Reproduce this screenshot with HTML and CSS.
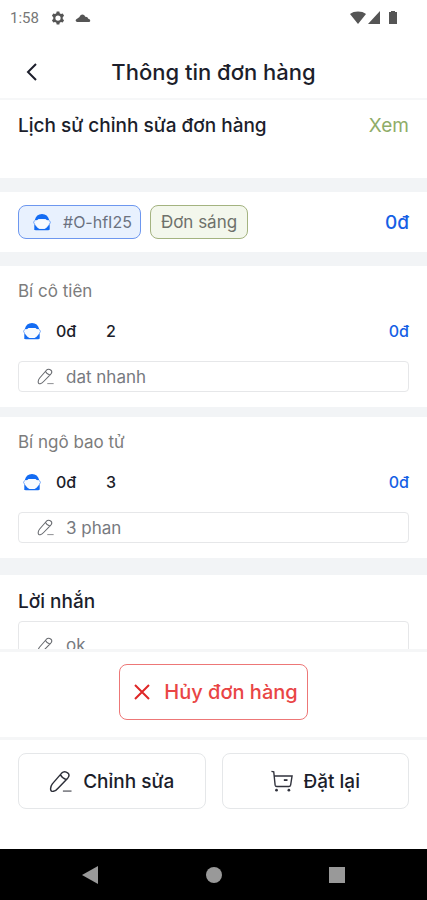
FILE: index.html
```html
<!DOCTYPE html>
<html lang="vi">
<head>
<meta charset="utf-8">
<meta name="viewport" content="width=device-width, initial-scale=1">
<title>Thông tin đơn hàng</title>
<link rel="stylesheet" href="styles.css">
</head>
<body>
<svg class="defs" aria-hidden="true">
  <symbol id="pen" viewBox="0 0 24 24">
    <path d="M13 3.500 3.500 14.500c-1.300 1.700-2 3.800-1.800 5.700.2 1.800 1.300 2.400 3 2 2-.4 3.500-1.700 5-3.500L19.500 8.500c1.700-2 1.900-3.800.2-5.300-2.100-1.700-4.800-1.700-6.700.3Z M12 5c1.200 2.600 3.200 4.300 6.200 5"/>
    <path d="M14.500 22H23.500" opacity=".7"/>
  </symbol>
  <symbol id="person" viewBox="0 0 18 18">
    <path d="M1.800 7C2.800 3 5.200 1 9 1s6.200 2 7.200 6L14 7.200 12.500 6h-7L4 7.200Z" fill="#146cf3"/>
    <path d="M1.300 11 4.500 14.700l2 1.300h5l2-1.300 3.200-3.700v5c0 .8-.5 1.200-1.300 1.200H2.600c-.8 0-1.300-.4-1.300-1.200Z" fill="#146cf3"/>
    <path d="M2 7.200.5 9.200l1.300 2.600M16 7.200l1.500 2-1.300 2.600" fill="none" stroke="#75a8fa" stroke-width="1"/>
    <path d="M1.700 9.200 4 7.300 6.500 7 9 6.300l2.500.7 2.500.3 2.300 1.900-2 3.800-2.200 2.200H5.900l-2.200-2.200Z" fill="#f8fbff"/>
  </symbol>
</svg>

<div class="status">
  <div class="status-group">
    <span class="clock">1:58</span>
    <svg class="gear" viewBox="0 0 24 24"><path d="M9.700 1h4.600l.6 3 2.200 1.300 3-1 2.300 4-2.300 2.200v3l2.300 2.200-2.300 4-3-1-2.200 1.300-.6 3H9.700l-.6-3-2.200-1.300-3 1-2.300-4 2.300-2.200v-3L1.600 8.300l2.300-4 3 1L9.100 4Z M12 7.500a4.500 4.500 0 1 0 0 9 4.500 4.500 0 0 0 0-9Z" fill-rule="evenodd"/></svg>
    <svg class="cloud" viewBox="0 0 16 10"><path d="M3 9C.2 9-.2 6.500 2.400 5.400L4.500 4C5.200.8 9.200.4 10.200 3.800c1.800-.2 2.600.8 3 2 2.700.5 2.600 3.200.3 3.200Z"/></svg>
  </div>
  <svg class="signals" viewBox="0 0 48 14"><path d="M0 3C4-.3 12-.3 16 3L8 13Z M30 0v13H18Z M41 0h4v1h2v12h-8V1h2Z"/></svg>
</div>

<header class="header">
  <button class="back" aria-label="Quay lại"><svg viewBox="0 0 12 18"><path d="M10 1 2 9l8 8"/></svg></button>
  <h1>Thông tin đơn hàng</h1>
</header>

<main class="content">
  <section class="history">
    <h2>Lịch sử chỉnh sửa đơn hàng</h2>
    <a href="#history">Xem</a>
  </section>

  <section class="summary">
    <span class="chip chip-blue"><svg class="person"><use href="#person"/></svg>#O-hfI25</span>
    <span class="chip chip-green">Đơn sáng</span>
    <strong class="total">0đ</strong>
  </section>

  <section class="item">
    <h3>Bí cô tiên</h3>
    <div class="line">
      <svg class="person"><use href="#person"/></svg>
      <span class="price">0đ</span><span class="qty">2</span><strong class="amount">0đ</strong>
    </div>
    <label class="note"><svg class="pen"><use href="#pen"/></svg><input aria-label="Ghi chú Bí cô tiên" value="dat nhanh"></label>
  </section>

  <section class="item">
    <h3>Bí ngô bao tử</h3>
    <div class="line">
      <svg class="person"><use href="#person"/></svg>
      <span class="price">0đ</span><span class="qty">3</span><strong class="amount">0đ</strong>
    </div>
    <label class="note"><svg class="pen"><use href="#pen"/></svg><input aria-label="Ghi chú Bí ngô bao tử" value="3 phan"></label>
  </section>

  <section class="message">
    <h2>Lời nhắn</h2>
    <label class="note note-tall"><svg class="pen"><use href="#pen"/></svg><input aria-label="Lời nhắn" value="ok"></label>
  </section>
</main>

<footer>
  <div class="cancel-bar">
    <button class="btn btn-cancel"><svg class="cross" viewBox="0 0 16 16"><path d="m1 1 14 14M15 1 1 15"/></svg>Hủy đơn hàng</button>
  </div>
  <div class="actions">
    <button class="btn"><svg class="pen-large"><use href="#pen"/></svg>Chỉnh sửa</button>
    <button class="btn"><svg class="cart" viewBox="0 0 24 24"><path d="M.5 1.500 3 2l1.500 14.500c.2 1.200.8 1.500 1.800 1.500h13.200c1 0 1.700-.5 1.900-1.500L23 6.500H3.700"/><path d="M14 11h4" stroke-width="2"/><circle cx="6" cy="22" r="1.500"/><circle cx="19.500" cy="22" r="1.500"/></svg>Đặt lại</button>
  </div>
</footer>

<nav class="system-nav" aria-label="Hệ thống">
  <button aria-label="Trở về"><svg viewBox="0 0 18 18"><path d="M0 9 16 0v18Z"/></svg></button>
  <button aria-label="Màn hình chính"><svg viewBox="0 0 18 18"><circle cx="9" cy="9" r="8"/></svg></button>
  <button aria-label="Gần đây"><svg viewBox="0 0 18 18"><path d="M1 1h16v16H1Z"/></svg></button>
</nav>
</body>
</html>
```
FILE: styles.css
```css
* {
  box-sizing: border-box;
}

body {
  margin: 0;
  height: 100vh;
  display: flex;
  flex-direction: column;
  background: #fff;
  color: #1c1e2b;
  font-family: Inter, "Noto Sans", sans-serif;
}

h1, h2, h3 {
  margin: 0;
  font-weight: 500;
}

button, input {
  font: inherit;
  color: inherit;
}

svg {
  flex: none;
}

.defs {
  position: absolute;
  width: 0;
  height: 0;
}

.status {
  display: flex;
  justify-content: space-between;
  align-items: center;
  height: 36px;
  padding: 0 29px 0 10px;
  color: #777;
  fill: #555;
}

.status-group {
  display: flex;
  align-items: center;
}

.clock {
  font: 15px/20px Roboto, sans-serif;
}

.gear {
  width: 14px;
  height: 14px;
  margin-left: 12px;
}

.cloud {
  width: 16px;
  height: 10px;
  margin-left: 10px;
}

.signals {
  width: 48px;
  height: 14px;
}

.header {
  display: grid;
  grid-template-columns: 28px 1fr 28px;
  align-items: center;
  height: 64px;
  padding: 10px 18px 0;
  border-bottom: 2px solid #f6f7f8;
}

.header h1 {
  font-size: 22px;
  line-height: 28px;
  text-align: center;
}

.back {
  display: flex;
  justify-content: center;
  padding: 0;
  border: 0;
  background: none;
}

.back svg {
  width: 12px;
  height: 18px;
  fill: none;
  stroke: #1c1e2b;
  stroke-width: 2;
}

.content {
  flex: 1;
  min-height: 0;
  overflow: hidden;
}

.history {
  display: flex;
  justify-content: space-between;
  height: 78px;
  padding: 14px 18px 0;
}

h2 {
  font-size: 19px;
  line-height: 24px;
}

.history a {
  color: #8fac68;
  font-size: 19px;
  line-height: 24px;
  text-decoration: none;
}

.summary {
  display: flex;
  align-items: center;
  gap: 9px;
  padding: 13px 18px;
  border: solid #f2f4f6;
  border-width: 14px 0;
}

.chip {
  display: flex;
  align-items: center;
  height: 34px;
  padding: 0 10px;
  border: 1px solid;
  border-radius: 8px;
  font-size: 17px;
}

.chip-blue {
  gap: 12px;
  padding: 0 8px 0 14px;
  background: #e8f1fe;
  border-color: #6d97ef;
  color: #6b7280;
  font-size: 16px;
}

.chip-green {
  background: #f3f7ec;
  border-color: #a4b380;
  color: #6e716b;
}

.person {
  width: 18px;
  height: 18px;
}

.total, .amount {
  margin-left: auto;
  color: #165fe5;
  font-weight: 500;
}

.total {
  font-size: 19px;
}

.item {
  padding: 13px 18px 15px;
  border-bottom: 10px solid #f2f4f6;
}

.item h3 {
  color: #7c7c7c;
  font-size: 17px;
  font-weight: 400;
  line-height: 24px;
}

.item:nth-of-type(4) {
  border-bottom-width: 17px;
}

.line {
  display: flex;
  align-items: center;
  height: 24px;
  margin: 16px 0 18px;
  padding-left: 5px;
  font-size: 16px;
  font-weight: 500;
}

.price {
  width: 50px;
  margin-left: 15px;
}

.note {
  display: flex;
  align-items: center;
  gap: 12px;
  height: 31px;
  padding: 0 18px;
  border: 1px solid #e6e7e9;
  border-radius: 4px;
}

.note input {
  flex: 1;
  min-width: 0;
  padding: 0;
  border: 0;
  background: none;
  color: #777a80;
  font-size: 17px;
  line-height: 24px;
}

.note-tall {
  height: 48px;
  margin-top: 7px;
}

.pen, .pen-large {
  fill: none;
  stroke: #66696e;
  stroke-width: 1.5;
}

.pen {
  width: 17px;
  height: 17px;
}

.pen-large {
  width: 23px;
  height: 23px;
  stroke: #2c2e38;
}

.message {
  padding: 15px 18px;
}

.cancel-bar, .actions {
  display: flex;
  justify-content: center;
  border-top: 3px solid #f5f6f7;
}

.cancel-bar {
  padding: 12px 18px 17px;
}

.actions {
  gap: 16px;
  padding: 13px 18px 40px;
}

.btn {
  display: flex;
  justify-content: center;
  align-items: center;
  gap: 11px;
  height: 56px;
  padding: 0;
  border: 1px solid #e5e7e9;
  border-radius: 8px;
  background: #fff;
  font-size: 19px;
  font-weight: 500;
}

.actions .btn {
  flex: 1;
}

.btn-cancel {
  gap: 14px;
  padding: 0 9px 0 14px;
  border-color: #ed7777;
  color: #e94545;
  font-size: 20px;
}

.cross {
  width: 16px;
  height: 16px;
  stroke: #df2727;
  stroke-width: 2;
}

.cart {
  width: 22px;
  height: 22px;
  fill: none;
  stroke: #30323c;
  stroke-width: 1.5;
}

.cart circle {
  fill: #30323c;
  stroke: none;
}

.system-nav {
  display: flex;
  justify-content: center;
  align-items: center;
  gap: 105px;
  height: 51px;
  background: #000;
}

.system-nav button {
  display: flex;
  padding: 0;
  border: 0;
  background: none;
}

.system-nav svg {
  width: 18px;
  height: 18px;
  fill: #999;
}
```
